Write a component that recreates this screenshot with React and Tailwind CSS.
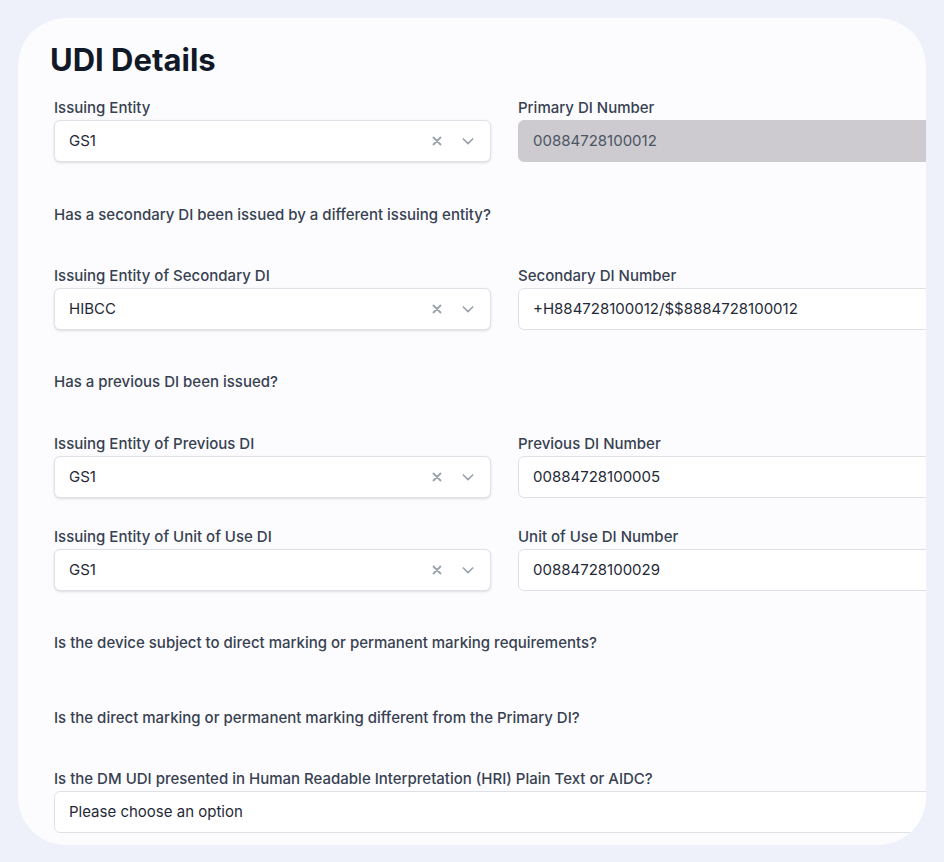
import React from "react";

const Chevron = () => (
  <svg width="16" height="16" viewBox="0 0 24 24" fill="none" stroke="#9ca3af" strokeWidth="2.5" strokeLinecap="round" strokeLinejoin="round">
    <path d="M5 9l7 7 7-7" />
  </svg>
);

const Cross = () => (
  <svg width="10" height="10" viewBox="0 0 10 10" stroke="#9ca3af" strokeWidth="1.8" strokeLinecap="round">
    <path d="M1.5 1.5l7 7M8.5 1.5l-7 7" />
  </svg>
);

const Label = ({ children }) => (
  <div className="text-[15px] font-medium text-[#374151] leading-[22px] h-[22px] mb-[1px]">{children}</div>
);

const Select = ({ label, value }) => (
  <div>
    <Label>{label}</Label>
    <div className="h-[42px] bg-white border border-[#dfe1e6] rounded-md shadow-sm flex items-center pl-[14px] pr-[14px] text-[15px] text-[#1f2937]">
      <span className="flex-1">{value}</span>
      <span className="mr-[18px] flex"><Cross /></span>
      <Chevron />
    </div>
  </div>
);

const Input = ({ label, value, disabled }) => (
  <div>
    <Label>{label}</Label>
    <div className={`h-[42px] border rounded-md flex items-center pl-[14px] text-[15px] ${disabled ? "bg-[#cdcbcf] border-[#cdcbcf] text-[#4b5563]" : "bg-white border-[#dfe1e6] text-[#1f2937]"}`}>
      {value}
    </div>
  </div>
);

const Question = ({ children }) => (
  <div className="text-[15px] font-medium text-[#374151] leading-[22px]">{children}</div>
);

export default function App() {
  return (
    <div className="w-[944px] h-[862px] bg-[#eef0fa] p-[18px] overflow-hidden" style={{ fontFamily: "Inter, 'Noto Sans', sans-serif" }}>
      <div className="h-[827px] bg-[#fcfcfe] rounded-[48px] overflow-hidden pl-[36px] pt-[24px]">
        <h1 className="text-[31px] font-bold text-[#111827] leading-[36px] ml-[-4px]">UDI Details</h1>
        <div className="w-[901px] mt-[19px]">
          <div className="grid grid-cols-[437px_437px] gap-x-[27px]">
            <Select label="Issuing Entity" value="GS1" />
            <Input label="Primary DI Number" value="00884728100012" disabled />
          </div>
          <div className="mt-[42px] mb-[39px]"><Question>Has a secondary DI been issued by a different issuing entity?</Question></div>
          <div className="grid grid-cols-[437px_437px] gap-x-[27px]">
            <Select label="Issuing Entity of Secondary DI" value="HIBCC" />
            <Input label="Secondary DI Number" value="+H884728100012/$$8884728100012" />
          </div>
          <div className="mt-[41px] mb-[40px]"><Question>Has a previous DI been issued?</Question></div>
          <div className="grid grid-cols-[437px_437px] gap-x-[27px] gap-y-[28px]">
            <Select label="Issuing Entity of Previous DI" value="GS1" />
            <Input label="Previous DI Number" value="00884728100005" />
            <Select label="Issuing Entity of Unit of Use DI" value="GS1" />
            <Input label="Unit of Use DI Number" value="00884728100029" />
          </div>
          <div className="mt-[41px]"><Question>Is the device subject to direct marking or permanent marking requirements?</Question></div>
          <div className="mt-[53px]"><Question>Is the direct marking or permanent marking different from the Primary DI?</Question></div>
          <div className="mt-[39px]">
            <Label>Is the DM UDI presented in Human Readable Interpretation (HRI) Plain Text or AIDC?</Label>
            <div className="h-[42px] bg-white border border-[#dfe1e6] rounded-md flex items-center pl-[14px] text-[15px] text-[#1f2937]">Please choose an option</div>
          </div>
        </div>
      </div>
    </div>
  );
}
